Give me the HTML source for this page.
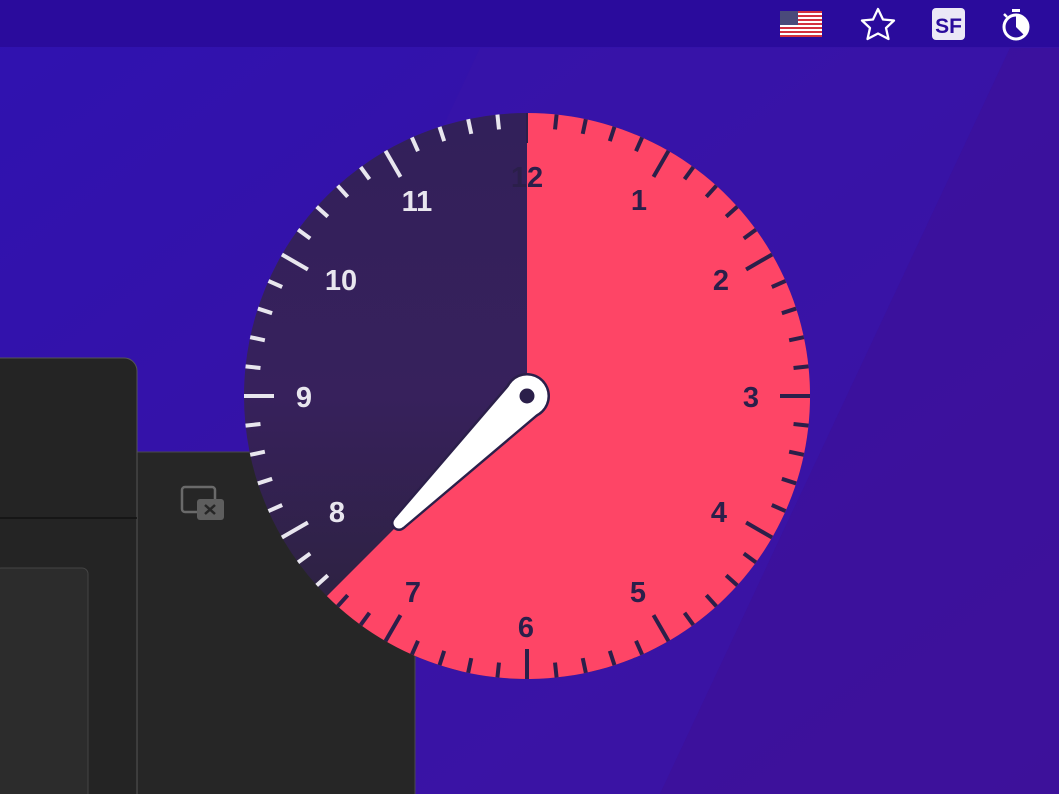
<!DOCTYPE html>
<html><head><meta charset="utf-8"><style>
html,body{margin:0;padding:0;width:1059px;height:794px;overflow:hidden;background:#3512a6;font-family:"Liberation Sans",sans-serif}
</style></head><body>
<svg width="1059" height="794" viewBox="0 0 1059 794" xmlns="http://www.w3.org/2000/svg" style="position:absolute;left:0;top:0">
<defs>
<linearGradient id="bg" x1="0" y1="0" x2="1" y2="1">
<stop offset="0" stop-color="#2f12b0"/><stop offset="1" stop-color="#3e139c"/></linearGradient>
<linearGradient id="dk" x1="0" y1="0" x2="0" y2="1">
<stop offset="0" stop-color="#32205a"/><stop offset="0.5" stop-color="#37215c"/><stop offset="1" stop-color="#2a2238"/></linearGradient>
</defs>
<rect width="1059" height="794" fill="url(#bg)"/>
<polygon points="480,48 1010,48 660,794 130,794" fill="#3a14a8" opacity="0.5"/>
<polygon points="1010,48 1059,48 1059,794 660,794" fill="#3d1199" opacity="0.6"/>
<rect width="1059" height="47" fill="#2a0b9c"/>
<g transform="translate(780,11)">
<rect width="42" height="26" fill="#fff"/>
<g fill="#d3303e"><rect y="0" width="42" height="2"/><rect y="4" width="42" height="2"/><rect y="8" width="42" height="2"/><rect y="12" width="42" height="2"/><rect y="16" width="42" height="2"/><rect y="20" width="42" height="2"/><rect y="24" width="42" height="2"/></g>
<rect width="18" height="14" fill="#4a4a7a"/>
</g>
<path d="M878 9 L883 19.5 L894 20.5 L886 28 L888.5 39 L878 33.5 L867.5 39 L870 28 L862 20.5 L873 19.5 Z" fill="none" stroke="#fff" stroke-width="2.3" stroke-linejoin="round"/>
<rect x="932" y="8" width="33" height="32" rx="4" fill="#ebe8f6"/>
<text x="948.5" y="33" text-anchor="middle" font-size="21" font-weight="bold" fill="#2a0b9c">SF</text>
<circle cx="1016" cy="27" r="12" fill="none" stroke="#fff" stroke-width="3"/>
<path d="M1016 27 L1016 15 A12 12 0 0 1 1024.5 35.5 Z" fill="#fff"/>
<rect x="1012" y="9" width="8" height="3" fill="#fff"/>
<line x1="1004" y1="14" x2="1007" y2="17" stroke="#fff" stroke-width="2.5"/>
<rect x="137" y="452" width="278" height="360" fill="#262626" stroke="#4a4a4a"/>
<g transform="translate(181,486)" fill="none" stroke="#6a6a6a" stroke-width="2.5"><rect x="1" y="1" width="33" height="25" rx="3"/></g>
<rect x="197" y="499" width="27" height="21" rx="3" fill="#5e5e5e"/>
<path d="M205 505 L215 514 M215 505 L205 514" stroke="#262626" stroke-width="2.5"/>
<path d="M-1 358 H124 A13 13 0 0 1 137 371 V800 H-1 Z" fill="#242424" stroke="#555" stroke-width="1"/>
<line x1="0" y1="518" x2="137" y2="518" stroke="#111" stroke-width="1.5"/>
<rect x="-5" y="568" width="93" height="240" rx="6" fill="#2c2c2c" stroke="#444"/>
<circle cx="527" cy="396" r="283" fill="url(#dk)"/>
<path d="M527 396 L527 113 A283 283 0 1 1 326.9 596.1 Z" fill="#fe4566"/>
<g id="ticks"></g>
<g font-size="29" font-weight="bold" text-anchor="middle">
<text x="527" y="187" fill="#2b1f4a">12</text>
<text x="639" y="210" fill="#2b1f4a">1</text>
<text x="721" y="290" fill="#2b1f4a">2</text>
<text x="751" y="407" fill="#2b1f4a">3</text>
<text x="719" y="522" fill="#2b1f4a">4</text>
<text x="638" y="602" fill="#2b1f4a">5</text>
<text x="526" y="637" fill="#2b1f4a">6</text>
<text x="413" y="602" fill="#2b1f4a">7</text>
<text x="337" y="522" fill="#e8e6ee">8</text>
<text x="304" y="407" fill="#e8e6ee">9</text>
<text x="341" y="290" fill="#e8e6ee">10</text>
<text x="417" y="211" fill="#e8e6ee">11</text>
</g>
<g fill="#2b1f4a">
<circle cx="527" cy="396" r="23"/><circle cx="399" cy="523" r="8"/>
<polygon points="542.5,412.3 404.6,528.7 393.4,517.3 511.5,379.7"/>
</g>
<g fill="#fff">
<circle cx="527" cy="396" r="20.5"/><circle cx="399" cy="523" r="5.5"/>
<polygon points="541.1,410.2 403,527 395,519 512.9,381.8"/>
</g>
<circle cx="527" cy="396" r="7.5" fill="#2b1f4a"/>
</svg>
<script>
var g=document.getElementById('ticks'),s='';
for(var i=0;i<60;i++){var a=i*6*Math.PI/180,maj=i%5==0,len=maj?30:15,R=283;
var x1=527+Math.sin(a)*R,y1=396-Math.cos(a)*R,x2=527+Math.sin(a)*(R-len),y2=396-Math.cos(a)*(R-len);
var dark=(i*6<=225);var c=dark?'#2b1f4a':'#e8e6ee';var w=i==0?2:4;
s+='<line x1="'+x1+'" y1="'+y1+'" x2="'+x2+'" y2="'+y2+'" stroke="'+c+'" stroke-width="'+w+'"/>';}
g.innerHTML=s;
</script>
</body></html>
